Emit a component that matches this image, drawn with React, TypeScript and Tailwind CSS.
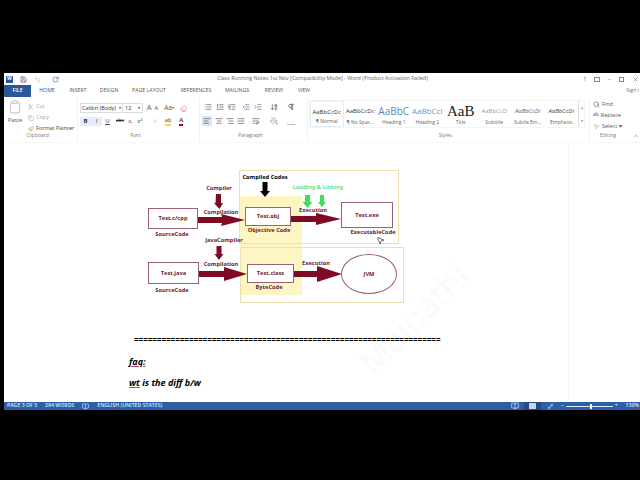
import {
  AlignCenter,
  AlignJustify,
  AlignLeft,
  AlignRight,
  ArrowDownAZ,
  BookOpen,
  ChevronUp,
  Clipboard,
  Copy,
  Eraser,
  IndentDecrease,
  IndentIncrease,
  List,
  ListOrdered,
  ListTree,
  Minimize2,
  MousePointer2,
  PaintBucket,
  Paintbrush,
  Pilcrow,
  RotateCw,
  Save,
  Scissors,
  Search,
  Undo2,
  WrapText,
  X,
} from "lucide-react";

const sans = "font-['Open_Sans','Liberation_Sans',sans-serif]";

const tabs = [
  ["HOME", "w-[32px]"],
  ["INSERT", "w-[30px]"],
  ["DESIGN", "w-[32px]"],
  ["PAGE LAYOUT", "w-[48px]"],
  ["REFERENCES", "w-[46px]"],
  ["MAILINGS", "w-[36px]"],
  ["REVIEW", "w-[38px]"],
  ["VIEW", "w-[22px]"],
];

const styles = [
  { name: "¶ Normal", sample: "AaBbCcDc", cls: "text-[6px] text-[#333]", active: true },
  { name: "¶ No Spac...", sample: "AaBbCcDc", cls: "text-[6px] text-[#333]" },
  { name: "Heading 1", sample: "AaBbC", cls: "text-[10px] text-[#5b87b5]" },
  { name: "Heading 2", sample: "AaBbCcI", cls: "text-[8px] text-[#6d96bd]" },
  { name: "Title", sample: "AaB", cls: "text-[15px] text-[#222] font-['Liberation_Serif',serif]" },
  { name: "Subtitle", sample: "AaBbCcD", cls: "text-[6px] text-[#999]" },
  { name: "Subtle Em...", sample: "AaBbCcDi", cls: "text-[6px] italic text-[#666]" },
  { name: "Emphasis", sample: "AaBbCcDi", cls: "text-[6px] italic text-[#444]" },
];

function GroupLabel({ children }: { children: string }) {
  return <div className="absolute bottom-[3px] left-0 right-[6px] text-center text-[5px] text-[#777]">{children}</div>;
}

function Group({ width, label, children }: { width: string; label: string; children: React.ReactNode }) {
  return (
    <div className={`relative h-full shrink-0 border-r border-[#f2f2f2] ${width}`}>
      {children}
      <GroupLabel>{label}</GroupLabel>
    </div>
  );
}

function Label({ x, y, children, color = "text-[#6f1a35]" }: { x: number; y: number; children: string; color?: string }) {
  return (
    <div
      className={`absolute -translate-x-1/2 -translate-y-1/2 whitespace-nowrap text-[5.700px] font-bold ${color}`}
      style={{ left: x, top: y }}
    >
      {children}
    </div>
  );
}

function Box({ x, y, w, h, children }: { x: number; y: number; w: number; h: number; children: string }) {
  return (
    <div
      className="absolute flex items-center justify-center border border-[#9a6078] bg-white text-[5.700px] font-bold text-[#6f1a35]"
      style={{ left: x, top: y, width: w, height: h }}
    >
      {children}
    </div>
  );
}

function Diagram() {
  // page coordinates, offset by the window origin (4, 143)
  return (
    <div className="absolute left-[-4px] top-[-143px] h-[480px] w-[640px]">
      <div className="absolute left-[240px] top-[196px] h-[99px] w-[62px] bg-[#fdf6c3]" />
      <div className="absolute left-[239px] top-[170px] h-[74px] w-[160px] border border-[#f0dfae]" />
      <div className="absolute left-[240px] top-[247px] h-[56px] w-[164px] border border-[#f0dfae]" />

      <Box x={148} y={208} w={50} h={21}>Test.c/cpp</Box>
      <Box x={245} y={207} w={46} h={19}>Test.obj</Box>
      <Box x={341} y={202} w={52} h={26}>Test.exe</Box>
      <Box x={148} y={262} w={51} h={22}>Test.java</Box>
      <Box x={247} y={264} w={47} h={19}>Test.class</Box>
      <div className="absolute left-[341px] top-[254px] flex h-[40px] w-[56px] items-center justify-center rounded-[50%] border border-[#9a6078] text-[5.700px] font-bold text-[#6f1a35]">
        JVM
      </div>

      <svg className="absolute left-0 top-0" width="640" height="480" viewBox="0 0 640 480">
        <g fill="#7f0a24">
          <path d="M198 217h24l-1-3 24 6-24 6 1-3h-24z" />
          <path d="M291 216h25v-3l25 6-25 6v-3h-25z" />
          <path d="M199 271h25v-4l23 7-23 7v-4h-25z" />
          <path d="M294 271h23v-5l25 8-25 8v-5h-23z" />
          <path d="M216 194h5v9h2l-3.500 6-5.500-6h1.500z" />
          <path d="M216.500 246h5v8h2l-4.500 6-4.500-6h2z" />
        </g>
        <path d="M262.500 182h5v9h2.500l-5 6-5-6h2.500z" fill="#000" />
        <g fill="#3fdc5a">
          <path d="M305 195h5v7h2.500l-5 6-5-6h2.500z" />
          <path d="M320 195h4v7h2l-4 5-4-5h2z" />
        </g>
      </svg>

      <Label x={219} y={188}>Compiler</Label>
      <Label x={221} y={212}>Compilation</Label>
      <Label x={172} y={234}>SourceCode</Label>
      <Label x={224} y={240}>JavaCompiler</Label>
      <Label x={221} y={264}>Compilation</Label>
      <Label x={172} y={290}>SourceCode</Label>
      <Label x={265} y={177} color="text-black">Compiled Codes</Label>
      <Label x={318} y={187} color="text-[#5fe38a]">Loading &amp; Linking</Label>
      <Label x={313} y={210}>Execution</Label>
      <Label x={269} y={230}>Objective Code</Label>
      <Label x={373} y={232}>ExecutableCode</Label>
      <Label x={316} y={263}>Execution</Label>
      <Label x={269} y={287}>ByteCode</Label>

      <MousePointer2 className="absolute left-[376px] top-[236px] size-[9px] text-[#333]" />
    </div>
  );
}

export default function App() {
  return (
    <div className={`h-[480px] w-[640px] overflow-hidden bg-black pl-[4px] pt-[73px] ${sans}`}>
      <div className="flex h-[337px] flex-col bg-white">
        {/* title bar */}
        <div className="relative flex h-[12px] shrink-0 items-center text-[#666]">
          <div className="ml-[2px] flex size-[7px] items-center justify-center bg-[#2b579a] text-[5px] font-bold text-white">W</div>
          <Save className="ml-[7px] size-[7px] text-[#6d3a8c]" />
          <Undo2 className="ml-[7px] size-[7px] text-[#bbb]" />
          <RotateCw className="ml-[11px] size-[7px] text-[#2b579a]" />
          <div className="ml-[158px] whitespace-nowrap text-[5.400px] leading-none">
            Class Running Notes 1st Nov [Compatibility Mode] - Word (Product Activation Failed)
          </div>
          <div className="ml-auto flex items-center gap-[8px] pr-[1px] text-[6px]">
            <span>?</span>
            <span className="h-[5px] w-[6px] border border-[#888]" />
            <span>–</span>
            <span className="size-[5px] border border-[#888]" />
            <X className="size-[7px]" />
          </div>
        </div>

        {/* tabs */}
        <div className="relative flex h-[12px] shrink-0 items-center text-[5.200px] text-[#555]">
          <div className="flex h-full w-[27px] items-center justify-center bg-[#2b579a] font-semibold text-white">FILE</div>
          <div className="flex">
            {tabs.map(([t, w]) => (
              <div key={t} className={`${w} whitespace-nowrap text-center ${t === "HOME" ? "text-[#2b579a]" : ""}`}>
                {t}
              </div>
            ))}
          </div>
          <div className="ml-auto pr-[1px] text-[#777]">Sign i</div>
        </div>

        {/* ribbon */}
        <div className="flex h-[46px] shrink-0 border-b border-[#f6f6f6] text-[#555]">
          <Group width="w-[74px]" label="Clipboard">
            <div className="absolute left-[4px] top-[3px] flex flex-col items-center text-[5.500px]">
              <Clipboard className="size-[14px] text-[#ccc]" />
              <span className="mt-[2px]">Paste</span>
            </div>
            <div className="absolute left-[24px] top-[6px] flex flex-col gap-[4px] text-[5.500px]">
              <div className="flex h-[7px] items-center gap-[2px] text-[#aaa]"><Scissors className="size-[6px]" />Cut</div>
              <div className="flex h-[7px] items-center gap-[2px] text-[#aaa]"><Copy className="size-[6px]" />Copy</div>
              <div className="flex h-[7px] items-center gap-[2px] whitespace-nowrap text-[#444]"><Paintbrush className="size-[6px] text-[#c9952a]" />Format Painter</div>
            </div>
          </Group>

          <Group width="w-[122px]" label="Font">
            <div className="mt-[6px] flex items-center">
              <div className="ml-[2px] flex h-[10px] w-[43px] items-center justify-between border border-[#ddd] px-[1px] text-[5.500px] text-[#333]">Calibri (Body)<span className="text-[4px]">▾</span></div>
              <div className="flex h-[10px] w-[20px] items-center justify-between border border-l-0 border-[#ddd] px-[2px] text-[5.500px] text-[#333]">12<span className="text-[4px]">▾</span></div>
              <span className="ml-[4px] text-[7px]">A</span>
              <span className="ml-[3px] text-[6px]">A</span>
              <span className="ml-[6px] text-[6.500px]">Aa</span>
              <span className="text-[4px]">▾</span>
              <Eraser className="ml-[6px] size-[7px] text-[#d06a9a]" />
            </div>
            <div className="ml-[2px] mt-[3px] flex items-center text-[6px] text-[#333]">
              <span className="flex h-[9px] w-[11px] items-center justify-center bg-[#e3eef8] font-bold">B</span>
              <span className="flex h-[9px] w-[11px] items-center justify-center bg-[#e3eef8] italic">I</span>
              <span className="flex h-[9px] w-[11px] items-center justify-center underline">U</span>
              <span className="ml-[3px] text-[5px] line-through">abc</span>
              <span className="ml-[4px] text-[5.500px]">x,</span>
              <span className="ml-[5px] text-[5.500px]">x²</span>
              <span className="ml-[11px] text-[5.500px] text-[#ccc]">A</span>
              <span className="ml-[8px] border-b-2 border-[#f2e23a] text-[5.500px] leading-[7px]">ab</span>
              <span className="ml-[8px] border-b-2 border-[#c00] text-[6px] font-semibold leading-[7px]">A</span>
            </div>
          </Group>

          <Group width="w-[108px]" label="Paragraph">
            <div className="ml-[4px] mt-[6px] flex items-center gap-[4px]">
              <List className="size-[8px]" />
              <ListOrdered className="size-[8px]" />
              <ListTree className="size-[8px]" />
              <IndentDecrease className="ml-[2px] size-[8px] text-[#4a6f9e]" />
              <IndentIncrease className="size-[8px] text-[#4a6f9e]" />
              <ArrowDownAZ className="ml-[4px] size-[8px]" />
              <Pilcrow className="ml-[5px] size-[8px]" />
            </div>
            <div className="ml-[2px] mt-[5px] flex items-center gap-[3px]">
              <span className="bg-[#dbe8f5] p-[1px]"><AlignLeft className="size-[8px]" /></span>
              <AlignCenter className="size-[8px]" />
              <AlignRight className="size-[8px]" />
              <AlignJustify className="size-[8px]" />
              <WrapText className="ml-[4px] size-[8px]" />
              <PaintBucket className="ml-[7px] size-[8px] text-[#999]" />
              <span className="ml-[6px] h-[7px] w-[8px] border-b border-[#bbb]" />
            </div>
          </Group>

          <div className="relative h-full w-[282px] shrink-0 border-r border-[#f2f2f2]">
            <div className="ml-[1px] mt-[3px] flex h-[28px] w-[276px] border border-[#f4f4f4]">
              {styles.map((s) => (
                <div key={s.name + s.sample} className={`flex w-[33.500px] shrink-0 flex-col items-center justify-between overflow-hidden py-[2px] ${s.active ? "border border-[#dff0fa]" : ""}`}>
                  <div className={`flex h-[16px] items-center whitespace-nowrap leading-none ${s.cls}`}>{s.sample}</div>
                  <div className="whitespace-nowrap text-[5px] leading-none text-[#666]">{s.name}</div>
                </div>
              ))}
              <div className="ml-auto flex w-[7px] flex-col items-center justify-around border-l border-[#ddd] text-[4px] text-[#888]">
                <span>▴</span>
                <span>▾</span>
              </div>
            </div>
            <GroupLabel>Styles</GroupLabel>
          </div>

          <div className="relative h-full flex-1 text-[5.500px]">
            <div className="ml-[3px] mt-[3px] flex flex-col gap-[3px]">
              <div className="flex h-[8px] items-center gap-[2px]"><Search className="size-[7px]" />Find</div>
              <div className="flex h-[8px] items-center gap-[2px]"><span className="text-[5px] text-[#2b579a]">ab</span>Replace</div>
              <div className="flex h-[8px] items-center gap-[2px]"><MousePointer2 className="size-[7px] text-[#aaa]" />Select ▾</div>
            </div>
            <div className="absolute bottom-[3px] left-[10px] text-[5px] text-[#777]">Editing</div>
            <ChevronUp className="absolute bottom-[3px] right-[1px] size-[6px]" />
          </div>
        </div>

        {/* document */}
        <div className="relative min-h-0 flex-1 overflow-hidden bg-white">
          <div className="absolute bottom-0 left-[564px] top-0 border-l border-[#f7f7f7]" />
          <div className="absolute left-[340px] top-[150px] -rotate-45 whitespace-nowrap text-[34px] text-[#fcfaf8]">Malpathi</div>
          <Diagram />
          <div className="absolute left-[130px] top-[193px] whitespace-nowrap text-[8px] font-bold leading-none text-black">
            {"=".repeat(67)}
          </div>
          <div className="absolute left-[125px] top-[214px] text-[9px] font-bold italic leading-none text-black underline decoration-[#d0406a] underline-offset-1">
            faq:
          </div>
          <div className="absolute left-[125px] top-[235px] whitespace-nowrap text-[9px] font-bold italic leading-none text-black">
            <span className="underline decoration-[#d0406a] underline-offset-1">wt</span> is the diff b/w
          </div>
        </div>

        {/* status bar */}
        <div className="flex h-[8px] shrink-0 items-center bg-[#2f5ea8] text-[5.200px] font-semibold text-[#dfe8f5]">
          <span className="ml-[3px]">PAGE 3 OF 5</span>
          <span className="ml-[8px]">294 WORDS</span>
          <BookOpen className="ml-[8px] size-[7px]" />
          <span className="ml-[8px]">ENGLISH (UNITED STATES)</span>
          <div className="ml-auto flex h-full items-center">
            <BookOpen className="size-[8px]" />
            <div className="ml-[5px] flex h-full w-[17px] items-center justify-center bg-[#234a86]">
              <span className="h-[6px] w-[7px] bg-[#c8d6ea]" />
            </div>
            <Minimize2 className="ml-[6px] size-[7px]" />
            <span className="ml-[7px]">–</span>
            <div className="relative mx-[2px] h-px w-[47px] bg-[#dfe8f5]">
              <span className="absolute left-[24px] top-[-2px] h-[5px] w-[2px] bg-white" />
            </div>
            <span>+</span>
            <span className="ml-[8px] pr-[1px]">130%</span>
          </div>
        </div>
      </div>
    </div>
  );
}
